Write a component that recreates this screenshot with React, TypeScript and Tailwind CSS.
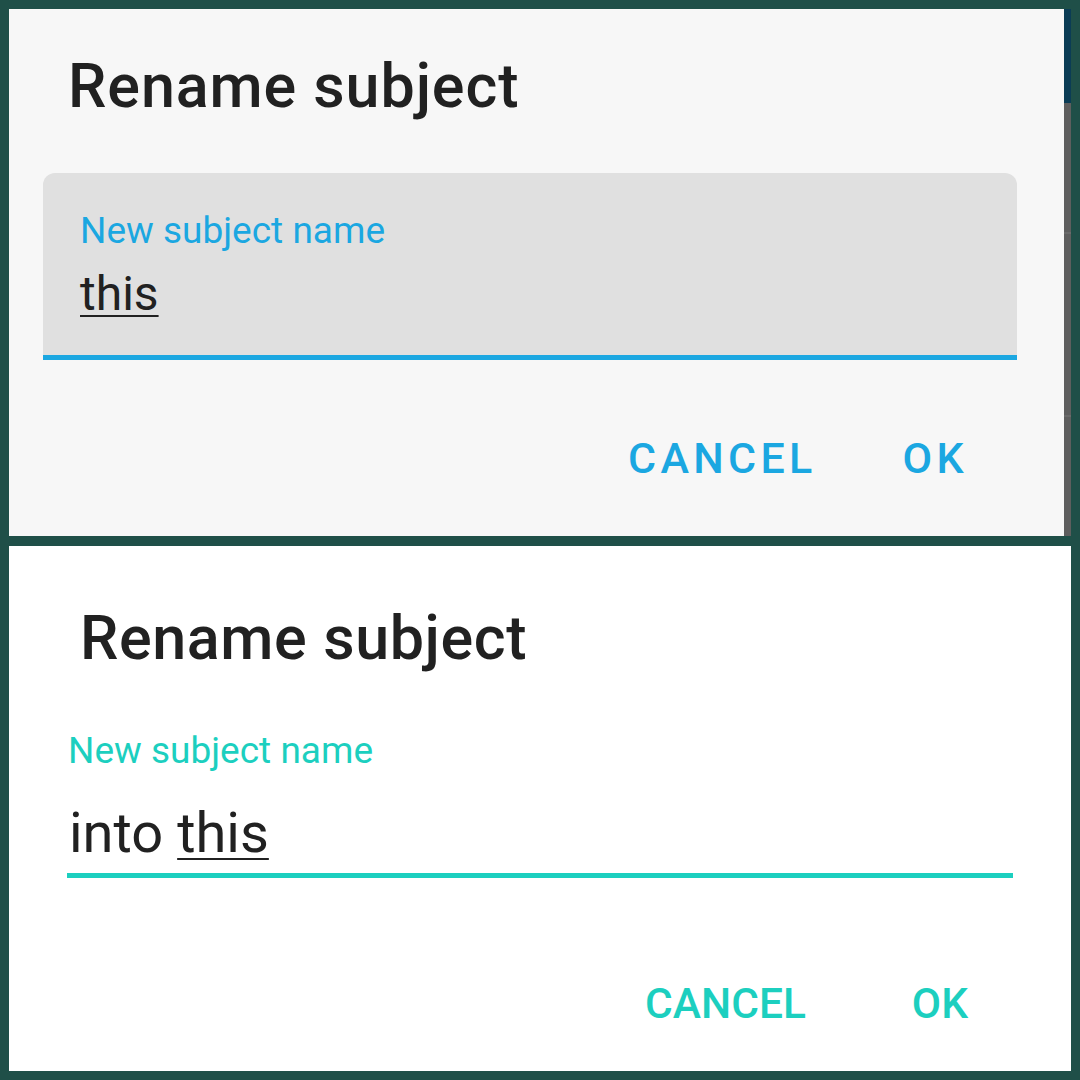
import React from "react";

const font = { fontFamily: "Roboto, 'Noto Sans', Arial, sans-serif" };

export default function App() {
  return (
    <div
      className="w-[1080px] h-[1080px] bg-[#1f4f48] pt-[9px] pl-[9px] flex flex-col gap-[10px] overflow-hidden"
      style={font}
    >
      {/* Top dialog */}
      <div className="flex">
        <div className="w-[1055px] h-[527px] bg-[#f7f7f7] flex flex-col">
          <div className="pl-[59px] pt-[47px] text-[61px] leading-none font-medium text-[#212121] tracking-[0.015em] h-[107px]">
            Rename subject
          </div>
          <div className="ml-[34px] mt-[57px] w-[974px] h-[187px] rounded-t-[12px] bg-[#e0e0e0] border-b-[5px] border-[#1ba7e1] flex flex-col pl-[37px] pt-[39px]">
            <div className="text-[37px] leading-none text-[#1ba7e1] h-[37px]">
              New subject name
            </div>
            <div className="mt-[21px] text-[48px] leading-none text-[#212121]">
              <span className="underline decoration-[2px] underline-offset-[5px]">this</span>
            </div>
          </div>
          <div className="mt-[77px] flex justify-end pr-[96px] gap-[86px] text-[43px] leading-none font-medium text-[#1ba7e1] tracking-[0.1em]">
            <span>CANCEL</span>
            <span>OK</span>
          </div>
        </div>
        <div className="w-[7px] h-[527px] flex flex-col bg-[#5e5e5e]">
          <div className="h-[94px] bg-[#0b3c55]" />
          <div className="h-[129px]" />
          <div className="h-[2px] bg-[#6a6a6a]" />
          <div className="h-[181px]" />
          <div className="h-[2px] bg-[#6a6a6a]" />
        </div>
      </div>

      {/* Bottom dialog */}
      <div className="w-[1062px] h-[525px] bg-white flex flex-col">
        <div className="pl-[71px] pt-[62px] text-[61px] leading-none font-medium text-[#212121] tracking-[0.01em] h-[122px]">
          Rename subject
        </div>
        <div className="pl-[59px] mt-[64px] text-[37px] leading-none text-[#1ccfbf] h-[37px]">
          New subject name
        </div>
        <div className="pl-[60px] mt-[36px] text-[56px] leading-none text-[#212121] h-[56px]">
          into <span className="underline decoration-[2px] underline-offset-[6px]">this</span>
        </div>
        <div className="ml-[58px] mt-[12px] w-[946px] h-[5px] bg-[#1ccfbf]" />
        <div className="mt-[105px] flex justify-end pr-[103px] gap-[106px] text-[42.5px] leading-none font-medium text-[#1ccfbf]">
          <span>CANCEL</span>
          <span>OK</span>
        </div>
      </div>
    </div>
  );
}
